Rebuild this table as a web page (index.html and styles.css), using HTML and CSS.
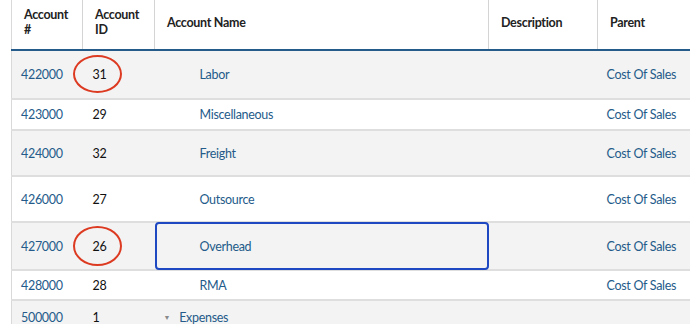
FILE: index.html
```html
<!DOCTYPE html>
<html lang="en">

<head>
    <meta charset="UTF-8">
    <meta name="viewport" content="width=device-width, initial-scale=1.0">
    <title>Chart of Accounts</title>
    <link rel="stylesheet" href="styles.css">
</head>

<body>

    <div class="grid-wrap">
        <table class="accounts">
            <colgroup>
                <col class="col-num">
                <col class="col-id">
                <col class="col-name">
                <col class="col-desc">
                <col class="col-parent">
            </colgroup>
            <thead>
                <tr>
                    <th>Account<br>#</th>
                    <th>Account<br>ID</th>
                    <th>Account Name</th>
                    <th>Description</th>
                    <th>Parent</th>
                </tr>
            </thead>
            <tbody>
                <tr class="row-alt h49">
                    <td><a href="#">422000</a></td>
                    <td><span class="acct-id marked">31</span></td>
                    <td class="name child"><a href="#">Labor</a></td>
                    <td></td>
                    <td class="parent"><a href="#">Cost Of Sales</a></td>
                </tr>
                <tr class="h31">
                    <td><a href="#">423000</a></td>
                    <td><span class="acct-id">29</span></td>
                    <td class="name child"><a href="#">Miscellaneous</a></td>
                    <td></td>
                    <td class="parent"><a href="#">Cost Of Sales</a></td>
                </tr>
                <tr class="row-alt h46">
                    <td><a href="#">424000</a></td>
                    <td><span class="acct-id">32</span></td>
                    <td class="name child"><a href="#">Freight</a></td>
                    <td></td>
                    <td class="parent"><a href="#">Cost Of Sales</a></td>
                </tr>
                <tr class="h46">
                    <td><a href="#">426000</a></td>
                    <td><span class="acct-id">27</span></td>
                    <td class="name child"><a href="#">Outsource</a></td>
                    <td></td>
                    <td class="parent"><a href="#">Cost Of Sales</a></td>
                </tr>
                <tr class="row-alt h48">
                    <td><a href="#">427000</a></td>
                    <td><span class="acct-id marked tall">26</span></td>
                    <td class="name child focused"><a href="#">Overhead</a></td>
                    <td></td>
                    <td class="parent"><a href="#">Cost Of Sales</a></td>
                </tr>
                <tr class="h30">
                    <td><a href="#">428000</a></td>
                    <td><span class="acct-id">28</span></td>
                    <td class="name child"><a href="#">RMA</a></td>
                    <td></td>
                    <td class="parent"><a href="#">Cost Of Sales</a></td>
                </tr>
                <tr class="row-alt h34">
                    <td><a href="#">500000</a></td>
                    <td><span class="acct-id">1</span></td>
                    <td class="name"><span class="caret">&#9660;</span><a href="#">Expenses</a></td>
                    <td></td>
                    <td class="parent"></td>
                </tr>
            </tbody>
        </table>
    </div>

</body>

</html>
```

FILE: styles.css
```css
body {
    font-family: 'Lato', 'Liberation Sans', sans-serif;
    background-color: #fff;
    margin: 0;
    overflow: hidden;
}

.grid-wrap {
    padding-left: 11px;
}

.accounts {
    width: 679px;
    border-collapse: collapse;
    table-layout: fixed;
    border-left: 1px solid #d9d9d9;
    font-size: 12.5px;
    letter-spacing: -0.3px;
}

.col-num { width: 71px; }
.col-id { width: 72px; }
.col-name { width: 334px; }
.col-desc { width: 109px; }
.col-parent { width: 93px; }

.accounts a {
    color: #245b8a;
    text-decoration: none;
}

/* header */
.accounts thead tr {
    height: 50px;
}

.accounts th {
    text-align: left;
    font-weight: 700;
    line-height: 15px;
    color: #222;
    padding: 0 12px 5px;
    border-right: 1px solid #d4d4d4;
    border-bottom: 2px solid #245b8a;
}

.accounts th:last-child {
    border-right: none;
}

/* body rows */
.accounts td {
    padding: 0 0 0 9px;
    color: #111;
    border-bottom: 2px solid #dedede;
    white-space: nowrap;
}

.accounts tbody tr:first-child td {
    border-top: 1px solid #e2e2e2;
}

.row-alt {
    background-color: #f3f3f3;
}

.h49 { height: 49px; }
.h48 { height: 48px; }
.h46 { height: 46px; }
.h34 { height: 34px; }
.h31 { height: 31px; }
.h30 { height: 30px; }

.accounts td:nth-child(2) {
    padding-left: 10px;
}

.acct-id {
    position: relative;
    display: inline-block;
}

/* red circle markup around some ids */
.acct-id.marked::after {
    content: "";
    position: absolute;
    left: -20px;
    top: -12px;
    width: 45px;
    height: 34px;
    border: 2px solid #dd3a22;
    border-radius: 50%;
}

.acct-id.marked.tall::after {
    top: -13px;
    height: 36px;
}

.name {
    padding-left: 9px !important;
}

.name.child {
    padding-left: 45px !important;
}

.caret {
    display: inline-block;
    font-size: 7px;
    color: #8a8a8a;
    margin-right: 9px;
    vertical-align: 2px;
}

.focused {
    outline: 2px solid #1d48c2;
    outline-offset: -2px;
    border-radius: 4px;
}

.parent {
    text-align: right;
    padding-right: 16px !important;
}
```
